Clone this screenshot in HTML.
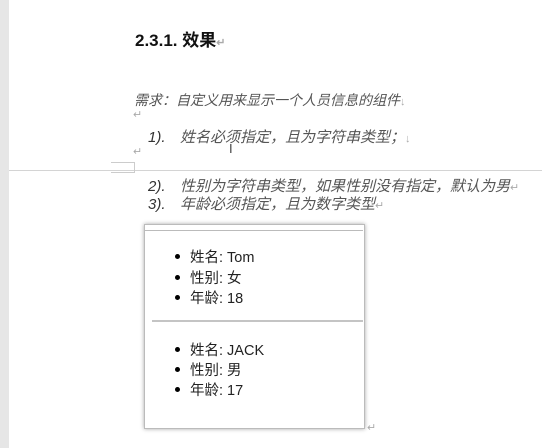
<!DOCTYPE html>
<html><head><meta charset="utf-8"><style>
body{margin:0;width:542px;height:448px;background:#fff;position:relative;overflow:hidden;font-family:"Liberation Sans","Noto Sans CJK SC",sans-serif;}
.a{position:absolute;white-space:nowrap;}
.it{font-style:italic;color:#555;font-size:14px;}
.n{font-size:15px;}
.n b{font-weight:normal;color:#333;display:inline-block;width:32px;}
.mk{color:#aaa;font-size:11px;font-style:normal;}
.li{position:absolute;font-size:14.5px;color:#222;white-space:nowrap;}
.li:before{content:"";position:absolute;left:-15px;top:8px;width:5px;height:5px;border-radius:50%;background:#000;}
</style></head><body>
<div class="a" style="left:0;top:0;width:9px;height:448px;background:#e6e6e6"></div>
<div class="a" style="left:9px;top:170px;width:533px;height:1px;background:#d4d4d4"></div>
<div class="a" style="left:111px;top:162px;width:24px;height:11px;border:1px solid #ccc;border-left:none;box-sizing:border-box"></div>
<div class="a" style="left:111px;top:162px;width:24px;height:1px;background:#ccc"></div>

<div class="a" style="left:135px;top:26px;font-size:17px;font-weight:bold;color:#111">2.3.1. 效果<span class="mk">↵</span></div>
<div class="a it" style="left:134px;top:90px">需求：自定义用来显示一个人员信息的组件<span class="mk">↓</span></div>
<div class="a mk" style="left:133px;top:108px">↵</div>
<div class="a it n" style="left:148px;top:126px"><b>1).</b>姓名必须指定，且为字符串类型；<span class="mk">↓</span></div>
<div class="a mk" style="left:133px;top:145px">↵</div>
<div class="a" style="left:229px;top:141px;font-size:13px;color:#444">I</div>
<div class="a it n" style="left:148px;top:175px"><b>2).</b>性别为字符串类型，如果性别没有指定，默认为男<span class="mk">↵</span></div>
<div class="a it n" style="left:148px;top:193px"><b>3).</b>年龄必须指定，且为数字类型<span class="mk">↵</span></div>

<div class="a" style="left:144px;top:224px;width:219px;height:203px;border:1px solid #bbb;box-shadow:0 0 4px rgba(0,0,0,.35);background:#fff"></div>
<div class="a" style="left:145px;top:230px;width:218px;height:1px;background:#bbb"></div>
<div class="a" style="left:152px;top:320px;width:211px;height:2px;background:#c4c4c4"></div>
<div class="li" style="left:190px;top:246px">姓名: Tom</div>
<div class="li" style="left:190px;top:267px">性别: 女</div>
<div class="li" style="left:190px;top:287px">年龄: 18</div>
<div class="li" style="left:190px;top:339px">姓名: JACK</div>
<div class="li" style="left:190px;top:359px">性别: 男</div>
<div class="li" style="left:190px;top:379px">年龄: 17</div>
<div class="a mk" style="left:367px;top:421px">↵</div>
</body></html>
